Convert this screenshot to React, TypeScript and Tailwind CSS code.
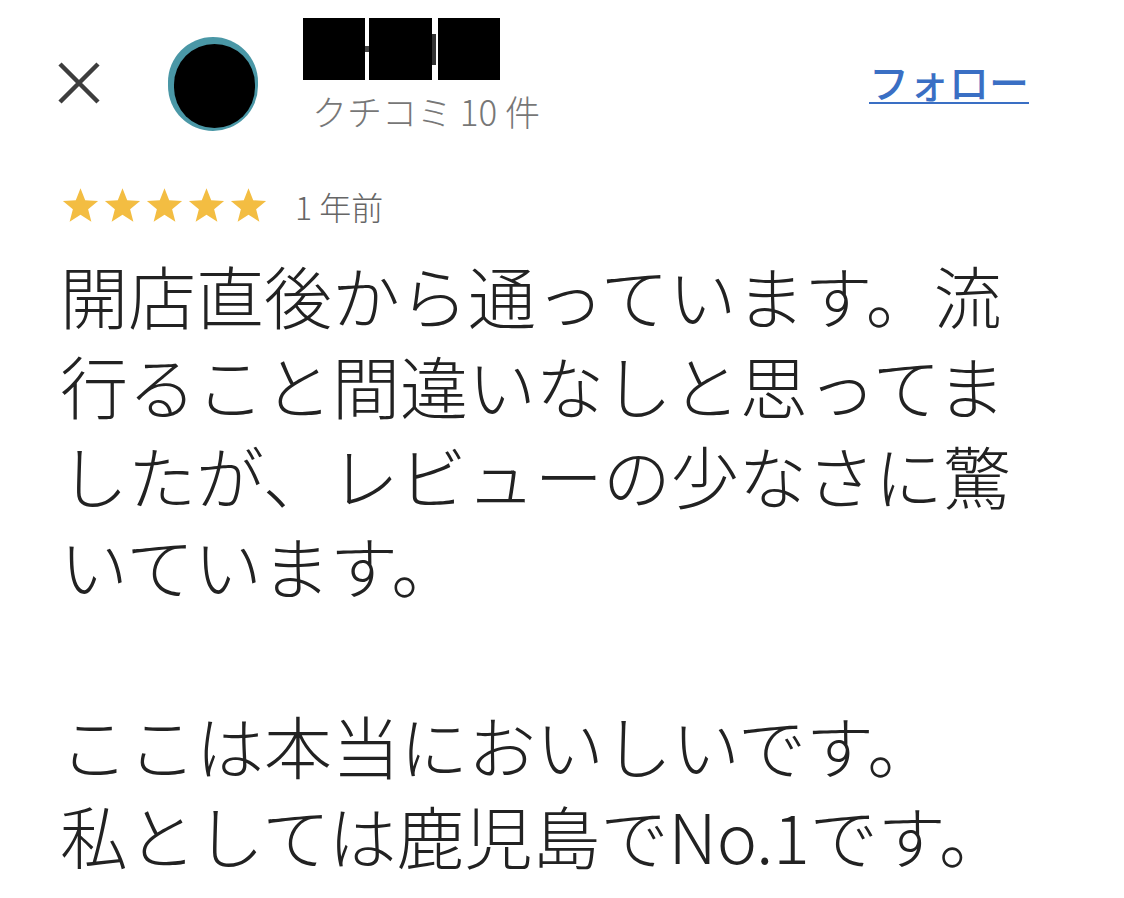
import React from "react";

const Star = () => (
  <svg width="37" height="37" viewBox="0 0 24 24" className="text-[#f3bd42]">
    <polygon
      fill="currentColor"
      points="12,0.8 15.06,8.59 23.41,9.09 16.95,14.41 19.05,22.51 12,18 4.95,22.51 7.05,14.41 0.59,9.09 8.94,8.59"
    />
  </svg>
);

const App = () => {
  return (
    <div
      className="min-h-screen w-full bg-white text-[#222]"
      style={{ fontFamily: '"Noto Sans CJK JP", "Noto Sans", sans-serif' }}
    >
      <div className="pl-[60px] pr-[95px]">
        {/* header */}
        <div className="flex h-[170px] items-start">
          <button className="mt-[61px] -ml-[3px] text-[#3d3d3d]">
            <svg width="44" height="44" viewBox="0 0 44 44">
              <path
                d="M3 3 L41 41 M41 3 L3 41"
                stroke="currentColor"
                strokeWidth="4.5"
                fill="none"
              />
            </svg>
          </button>
          <div className="ml-[67px] mt-[37px] flex h-[94px] w-[90px] items-start justify-start rounded-full bg-[#4a97a6]">
            <div className="ml-[6px] mt-[7px] h-[84px] w-[81px] rounded-full bg-black" />
          </div>
          <div className="ml-[45px] mt-[18px] flex flex-col">
            <div className="flex h-[62px] items-stretch">
              <div className="w-[62px] bg-black" />
              <div className="flex w-[4px] flex-col justify-between py-[28px]">
                <div className="h-[3px] bg-[#444]" />
                <div className="h-[3px] bg-[#444]" />
              </div>
              <div className="w-[63px] bg-black" />
              <div className="flex w-[6px] items-center">
                <div className="h-[31px] w-[4px] bg-[#333]" />
              </div>
              <div className="w-[62px] bg-black" />
            </div>
            <div className="mt-[12px] pl-[9px] text-[35px] font-light leading-[38px] text-[#777]">
              クチコミ 10 件
            </div>
          </div>
          <a
            href="#"
            className="ml-auto mt-[59px] text-[40px] font-medium leading-[44px] text-[#3a6fc4] underline decoration-2 underline-offset-[4px]"
          >
            フォロー
          </a>
        </div>

        {/* rating */}
        <div className="mt-[17px] ml-[2px] flex items-center">
          <div className="flex gap-[5px]">
            <Star />
            <Star />
            <Star />
            <Star />
            <Star />
          </div>
          <span className="ml-[28px] text-[32px] font-light leading-[36px] text-[#666]">
            1 年前
          </span>
        </div>

        {/* body */}
        <div className="mt-[26px] text-[68px] font-light leading-[90px] whitespace-nowrap">
          <p>
            開店直後から通っています。流
            <br />
            行ること間違いなしと思ってま
            <br />
            したが、レビューの少なさに驚
            <br />
            いています。
          </p>
          <p className="mt-[90px]">
            ここは本当においしいです。
            <br />
            私としては鹿児島でNo.1です。
          </p>
        </div>
      </div>
    </div>
  );
};

export default App;
